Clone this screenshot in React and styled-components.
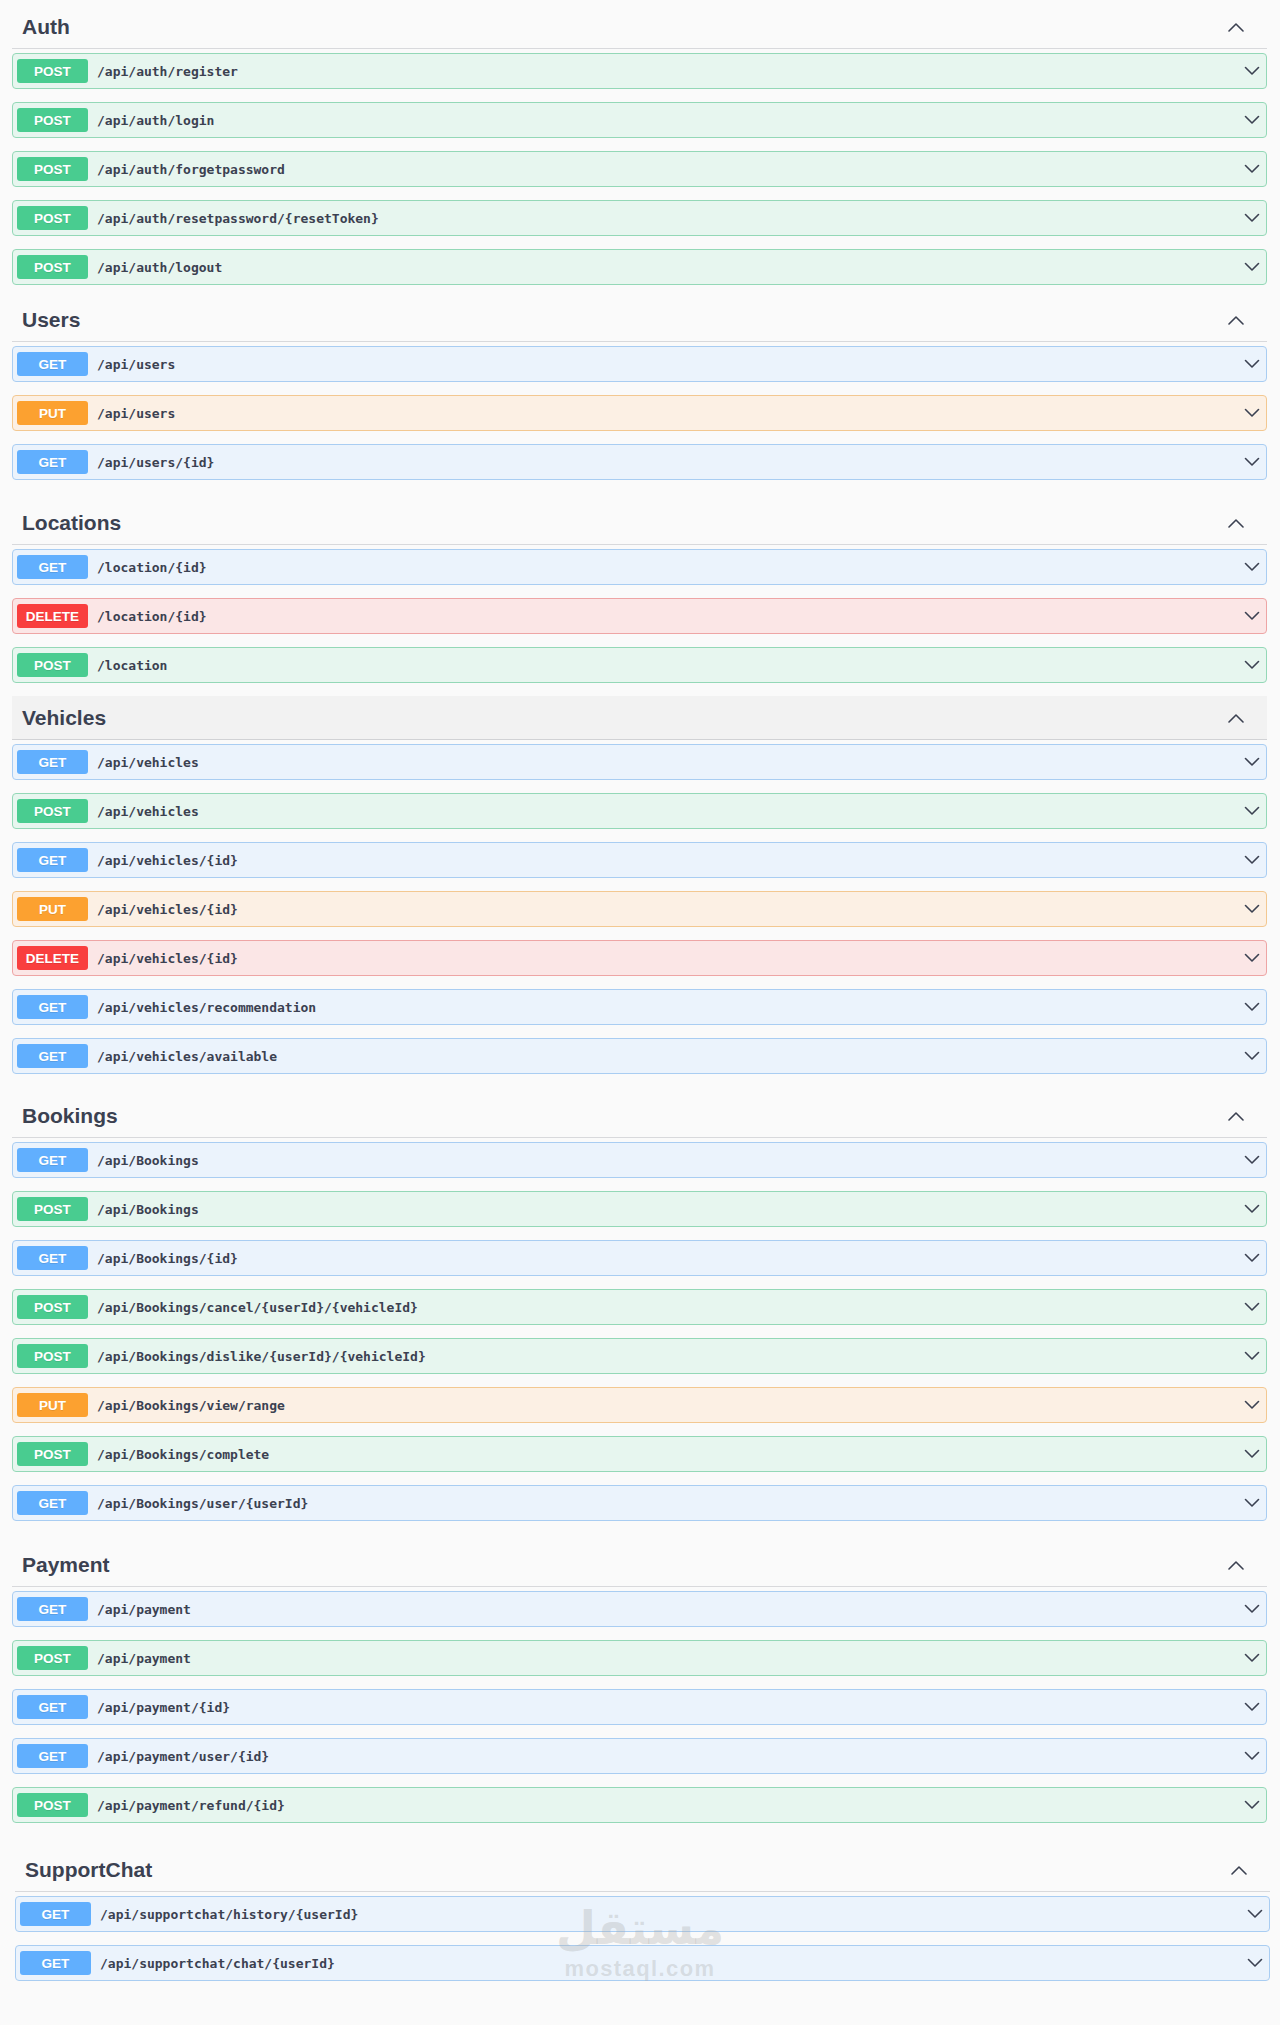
import React from 'react';
import styled, { createGlobalStyle } from 'styled-components';

const GlobalStyle = createGlobalStyle`
  html, body {
    margin: 0;
    padding: 0;
    background: #fafafa;
  }
`;

const METHODS = {
  GET: { badge: '#61affe', bg: '#ebf3fc', border: '#a9cdf2' },
  POST: { badge: '#49cc90', bg: '#e7f6ef', border: '#94d8b7' },
  PUT: { badge: '#fca130', bg: '#fcf0e4', border: '#f3c891' },
  DELETE: { badge: '#f93e3e', bg: '#fbe6e6', border: '#eea5a5' },
};

const Page = styled.div`
  position: relative;
  min-height: 100vh;
  box-sizing: border-box;
  display: flex;
  flex-direction: column;
  padding: 5px 13px 40px 12px;
  background: #fafafa;
  font-family: "Liberation Sans", Arial, sans-serif;
`;

const Section = styled.section`
  margin-top: ${(p) => p.$space || 0}px;
  margin-left: ${(p) => p.$shift || 0}px;
  margin-right: ${(p) => -(p.$shift || 0)}px;
`;

const TagHeader = styled.div`
  display: flex;
  align-items: center;
  justify-content: space-between;
  height: 44px;
  box-sizing: border-box;
  padding: 0 23px 0 10px;
  border-bottom: 1px solid rgba(59, 65, 81, 0.18);
  background: ${(p) => (p.$hover ? '#f2f2f2' : 'transparent')};
`;

const TagTitle = styled.h3`
  margin: 0;
  font-family: "Liberation Sans", Arial, sans-serif;
  font-size: 21px;
  font-weight: 700;
  color: #3b4151;
`;

const RowList = styled.div`
  display: flex;
  flex-direction: column;
  gap: 13px;
  padding: 4px 0 13px;
`;

const Row = styled.div`
  display: flex;
  align-items: center;
  height: 36px;
  box-sizing: border-box;
  padding: 0 6px 0 4px;
  border: 1px solid ${(p) => METHODS[p.$method].border};
  border-radius: 4px;
  background: ${(p) => METHODS[p.$method].bg};
`;

const Badge = styled.span`
  display: flex;
  align-items: center;
  justify-content: center;
  width: 71px;
  height: 24px;
  flex-shrink: 0;
  border-radius: 3px;
  background: ${(p) => METHODS[p.$method].badge};
  color: #fff;
  font-family: "Liberation Sans", Arial, sans-serif;
  font-size: 13.5px;
  font-weight: 700;
  text-shadow: 0 1px 0 rgba(0, 0, 0, 0.1);
`;

const Path = styled.span`
  flex: 1;
  margin-left: 9px;
  font-family: "DejaVu Sans Mono", "Liberation Mono", monospace;
  font-size: 13px;
  font-weight: 600;
  color: #3b4151;
`;

const Watermark = styled.div`
  position: absolute;
  left: 563px;
  top: 1898px;
  width: 154px;
  display: flex;
  flex-direction: column;
  align-items: center;
  color: rgba(170, 170, 170, 0.32);
  pointer-events: none;
`;

const WatermarkArabic = styled.span`
  font-family: "DejaVu Sans", sans-serif;
  font-size: 46px;
  font-weight: 700;
  line-height: 60px;
`;

const WatermarkLatin = styled.span`
  font-family: "Liberation Sans", Arial, sans-serif;
  font-size: 22px;
  font-weight: 700;
  letter-spacing: 1.4px;
  line-height: 22px;
`;

const ChevronUp = () => (
  <svg width="16" height="10" viewBox="0 0 16 10" fill="none">
    <polyline points="1,9 8,2 15,9" stroke="#3b4151" strokeWidth="1.6" strokeLinecap="round" strokeLinejoin="round" />
  </svg>
);

const ChevronDown = () => (
  <svg width="16" height="10" viewBox="0 0 16 10" fill="none">
    <polyline points="1.5,1.5 8,8 14.5,1.5" stroke="#3b4151" strokeWidth="1.6" strokeLinecap="round" strokeLinejoin="round" />
  </svg>
);

const sections = [
  {
    name: 'Auth', space: 0,
    ops: [
      ['POST', '/api/auth/register'],
      ['POST', '/api/auth/login'],
      ['POST', '/api/auth/forgetpassword'],
      ['POST', '/api/auth/resetpassword/{resetToken}'],
      ['POST', '/api/auth/logout'],
    ],
  },
  {
    name: 'Users', space: 0,
    ops: [
      ['GET', '/api/users'],
      ['PUT', '/api/users'],
      ['GET', '/api/users/{id}'],
    ],
  },
  {
    name: 'Locations', space: 8,
    ops: [
      ['GET', '/location/{id}'],
      ['DELETE', '/location/{id}'],
      ['POST', '/location'],
    ],
  },
  {
    name: 'Vehicles', space: 0, hover: true,
    ops: [
      ['GET', '/api/vehicles'],
      ['POST', '/api/vehicles'],
      ['GET', '/api/vehicles/{id}'],
      ['PUT', '/api/vehicles/{id}'],
      ['DELETE', '/api/vehicles/{id}'],
      ['GET', '/api/vehicles/recommendation'],
      ['GET', '/api/vehicles/available'],
    ],
  },
  {
    name: 'Bookings', space: 7,
    ops: [
      ['GET', '/api/Bookings'],
      ['POST', '/api/Bookings'],
      ['GET', '/api/Bookings/{id}'],
      ['POST', '/api/Bookings/cancel/{userId}/{vehicleId}'],
      ['POST', '/api/Bookings/dislike/{userId}/{vehicleId}'],
      ['PUT', '/api/Bookings/view/range'],
      ['POST', '/api/Bookings/complete'],
      ['GET', '/api/Bookings/user/{userId}'],
    ],
  },
  {
    name: 'Payment', space: 9,
    ops: [
      ['GET', '/api/payment'],
      ['POST', '/api/payment'],
      ['GET', '/api/payment/{id}'],
      ['GET', '/api/payment/user/{id}'],
      ['POST', '/api/payment/refund/{id}'],
    ],
  },
  {
    name: 'SupportChat', space: 12, shift: 3,
    ops: [
      ['GET', '/api/supportchat/history/{userId}'],
      ['GET', '/api/supportchat/chat/{userId}'],
    ],
  },
];

export default function App() {
  return (
    <>
      <GlobalStyle />
      <Page>
        {sections.map((s) => (
          <Section key={s.name} $space={s.space} $shift={s.shift}>
            <TagHeader $hover={s.hover}>
              <TagTitle>{s.name}</TagTitle>
              <ChevronUp />
            </TagHeader>
            <RowList>
              {s.ops.map(([method, path], i) => (
                <Row key={i} $method={method}>
                  <Badge $method={method}>{method}</Badge>
                  <Path>{path}</Path>
                  <ChevronDown />
                </Row>
              ))}
            </RowList>
          </Section>
        ))}
        <Watermark>
          <WatermarkArabic>مستقل</WatermarkArabic>
          <WatermarkLatin>mostaql.com</WatermarkLatin>
        </Watermark>
      </Page>
    </>
  );
}
